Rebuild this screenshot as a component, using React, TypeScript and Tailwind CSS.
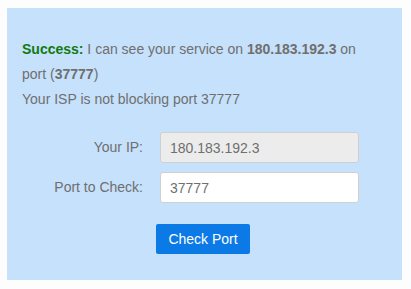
import React from 'react';

export default function App() {
    return (
        <div className="w-[411px] h-[289px] bg-[#fdfdfd] pt-[8px] pl-[7px]" style={{fontFamily: '"Liberation Sans", Arial, sans-serif'}}>
            <div className="w-[395px] h-[272px] bg-[#c6e1fb] pt-[29px] pl-[15px] text-[#6f6f6f] text-[14px]">
                <p className="leading-[25px]">
                    <b className="text-[#117a11]">Success:</b> I can see your service on <b>180.183.192.3</b> on
                    <br/>
                    port (<b>37777</b>)
                </p>
                <p className="leading-[25px]">Your ISP is not blocking port 37777</p>

                <div className="mt-[20px] flex flex-col gap-[9px]">
                    <div className="flex items-center">
                        <label className="w-[121px] text-right">Your IP:</label>
                        <input
                            className="ml-[17px] w-[199px] h-[31px] px-[9px] bg-[#ececec] border border-[#d0d0d0] rounded-[3px] text-[#6f6f6f] outline-none"
                            value="180.183.192.3"
                            readOnly
                        />
                    </div>
                    <div className="flex items-center">
                        <label className="w-[121px] text-right">Port to Check:</label>
                        <input
                            className="ml-[17px] w-[199px] h-[31px] px-[9px] bg-white border border-[#d0d0d0] rounded-[3px] text-[#6f6f6f] outline-none"
                            defaultValue="37777"
                        />
                    </div>
                </div>

                <div className="mt-[21px] pl-[134px]">
                    <button className="w-[94px] h-[30px] bg-[#0b7ae6] text-white text-[14px] rounded-[2px]">Check Port</button>
                </div>
            </div>
        </div>
    );
}
